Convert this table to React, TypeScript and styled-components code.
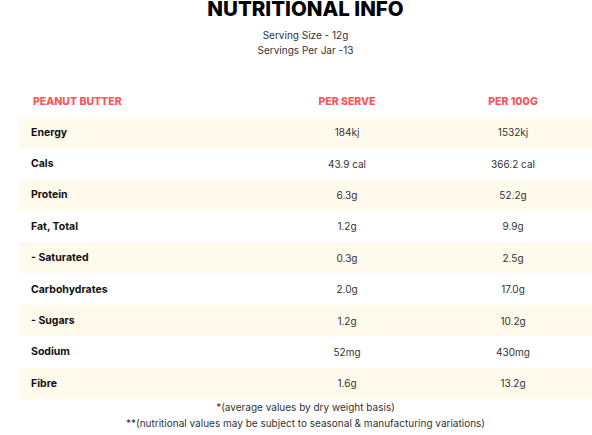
import React from "react";
import styled, { createGlobalStyle } from "styled-components";

const GlobalStyle = createGlobalStyle`
  html, body {
    overflow-x: hidden;
  }
  body {
    margin: 0;
    background: #fff;
    font-family: Inter, "Open Sans", sans-serif;
    color: #222;
  }
`;

const Page = styled.div`
  padding-left: 19px;
  width: 573px;
`;

const Title = styled.h2`
  margin: 0;
  text-align: center;
  font-size: 20.5px;
  font-weight: 800;
  color: #000;
  line-height: 18px;
`;

const Serving = styled.p`
  margin: 0;
  text-align: center;
  font-size: 10px;
  line-height: 15px;
  color: #333;
`;

const Info = styled.div`
  margin-top: 9.5px;
`;

const Table = styled.div`
  margin-top: 28px;
  display: grid;
  grid-template-columns: 245px 166px 166px;
`;

const Row = styled.div<{ $shade?: boolean }>`
  display: contents;
  & > div {
    background: ${(p) => (p.$shade ? "#fffaec" : "#fff")};
  }
`;

const Head = styled.div<{ $first?: boolean }>`
  height: 31px;
  display: flex;
  align-items: center;
  justify-content: ${(p) => (p.$first ? "flex-start" : "center")};
  padding-left: ${(p) => (p.$first ? "14px" : "0")};
  font-size: 10.5px;
  font-weight: 800;
  color: #f5575c;
  text-transform: uppercase;
`;

const Label = styled.div`
  height: 31.4px;
  display: flex;
  align-items: center;
  padding-left: 12px;
  font-size: 10.5px;
  font-weight: 700;
  color: #111;
`;

const Value = styled.div`
  height: 31.4px;
  display: flex;
  align-items: center;
  justify-content: center;
  font-size: 10px;
  color: #333;
`;

const Notes = styled.div`
  text-align: center;
  font-size: 10px;
  line-height: 16px;
  color: #333;
`;

const rows: [string, string, string][] = [
  ["Energy", "184kj", "1532kj"],
  ["Cals", "43.9 cal", "366.2 cal"],
  ["Protein", "6.3g", "52.2g"],
  ["Fat, Total", "1.2g", "9.9g"],
  ["- Saturated", "0.3g", "2.5g"],
  ["Carbohydrates", "2.0g", "17.0g"],
  ["- Sugars", "1.2g", "10.2g"],
  ["Sodium", "52mg", "430mg"],
  ["Fibre", "1.6g", "13.2g"],
];

export default function App() {
  return (
    <Page>
      <GlobalStyle />
      <Title>NUTRITIONAL INFO</Title>
      <Info>
        <Serving>Serving Size - 12g</Serving>
        <Serving>Servings Per Jar -13</Serving>
      </Info>
      <Table>
        <Row>
          <Head $first>Peanut Butter</Head>
          <Head>Per Serve</Head>
          <Head>Per 100g</Head>
        </Row>
        {rows.map(([name, serve, hundred], i) => (
          <Row key={name} $shade={i % 2 === 0}>
            <Label>{name}</Label>
            <Value>{serve}</Value>
            <Value>{hundred}</Value>
          </Row>
        ))}
      </Table>
      <Notes>
        <div>*(average values by dry weight basis)</div>
        <div>**(nutritional values may be subject to seasonal &amp; manufacturing variations)</div>
      </Notes>
    </Page>
  );
}
